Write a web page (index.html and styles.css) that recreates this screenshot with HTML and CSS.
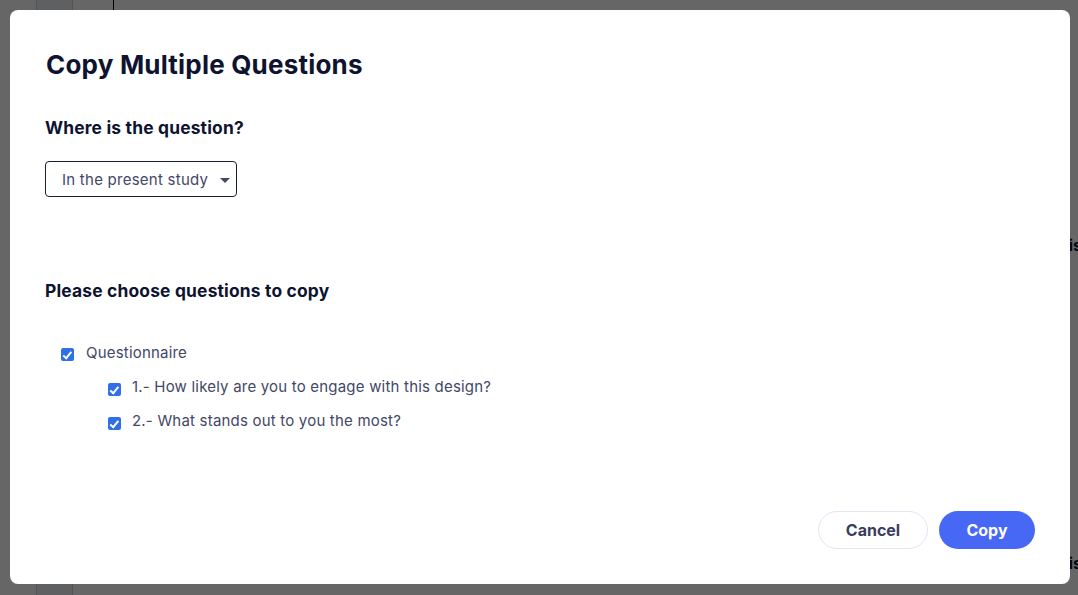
FILE: index.html
```html
<!DOCTYPE html>
<html lang="en">
<head>
<meta charset="utf-8">
<title>Copy Multiple Questions</title>
<link rel="stylesheet" href="styles.css">
</head>
<body>
<div class="page">
  <div class="page-rail"></div>
  <div class="page-divider"></div>
  <div class="page-text t1">This is</div>
  <div class="page-text t2">This is</div>
</div>
<div class="overlay">
  <div class="modal">
    <h1 class="modal-title">Copy Multiple Questions</h1>
    <h2 class="section-title">Where is the question?</h2>
    <div class="select">
      <span class="select-value">In the present study</span>
      <span class="select-caret"></span>
    </div>
    <h2 class="section-title choose">Please choose questions to copy</h2>
    <ul class="tree">
      <li class="row parent"><span class="check"></span><span class="label">Questionnaire</span></li>
      <li class="row child"><span class="check"></span><span class="label">1.- How likely are you to engage with this design?</span></li>
      <li class="row child"><span class="check"></span><span class="label">2.- What stands out to you the most?</span></li>
    </ul>
    <div class="footer">
      <button class="btn btn-cancel">Cancel</button>
      <button class="btn btn-copy">Copy</button>
    </div>
  </div>
</div>
</body>
</html>
```

FILE: styles.css
```css
* { box-sizing: border-box; }
html, body { margin: 0; padding: 0; }
body {
  width: 1078px;
  height: 595px;
  overflow: hidden;
  font-family: Inter, "Noto Sans", sans-serif;
  background: #ffffff;
  position: relative;
}
.page { position: absolute; inset: 0; }
.page-rail {
  position: absolute; left: 36px; top: 0; width: 37px; height: 595px;
  background: #eef0f6;
  border-left: 1px solid #d0d3de;
  border-right: 1px solid #d0d3de;
}
.page-divider {
  position: absolute; left: 113px; top: 0; width: 1px; height: 12px;
  background: #000;
}
.page-text {
  position: absolute; left: 1031px; font-weight: 700; font-size: 16px; color: #0e1330;
  white-space: nowrap;
}
.t1 { top: 235px; }
.t2 { top: 553px; }
.overlay {
  position: absolute; inset: 0;
  background: rgba(0, 0, 0, 0.6);
  display: flex;
  align-items: flex-start;
}
.modal {
  margin: 10px 0 0 10px;
  width: 1060px;
  height: 574px;
  flex: none;
  background: #fff;
  border-radius: 8px;
  padding: 39px 35px 35px 35px;
  display: flex;
  flex-direction: column;
}
.modal-title {
  margin: 0;
  font-size: 26px;
  line-height: 32px;
  font-weight: 700;
  letter-spacing: 0.2px;
  color: #0e1330;
  padding-left: 1px;
}
.section-title {
  margin: 35px 0 0;
  font-size: 17.4px;
  line-height: 24px;
  font-weight: 700;
  letter-spacing: 0.18px;
  color: #0e1330;
}
.section-title.choose { margin-top: 82px; }
.select {
  margin-top: 21px;
  width: 192px;
  height: 36px;
  border: 1px solid #1a1d33;
  border-radius: 4px;
  display: flex;
  align-items: center;
  justify-content: space-between;
  padding-left: 16px;
  padding-right: 6px;
}
.select-value { font-size: 15px; color: #434766; letter-spacing: 0.25px; white-space: nowrap; }
.select-caret {
  flex: none;
  width: 0; height: 0;
  border-left: 5px solid transparent;
  border-right: 5px solid transparent;
  border-top: 5px solid #434766;
  margin-top: 2px;
}
.tree { list-style: none; margin: 33px 0 0; padding: 0; }
.row { height: 34px; display: flex; align-items: center; }
.row.parent { padding-left: 16px; gap: 12px; }
.row.child { padding-left: 63px; gap: 11px; }
.check {
  width: 13px; height: 13px;
  border-radius: 2px;
  background: #2f6fe8;
  position: relative;
  margin-top: 3px;
  flex: none;
}
.row.child .check { margin-top: 5px; }
.check::after {
  content: "";
  position: absolute;
  left: 4px; top: 1.5px;
  width: 3px; height: 6.5px;
  border-right: 2px solid #fff;
  border-bottom: 2px solid #fff;
  transform: rotate(40deg);
}
.label { font-size: 15px; color: #434766; line-height: 20px; letter-spacing: 0.2px; white-space: nowrap; }
.footer {
  margin-top: auto;
  display: flex;
  justify-content: flex-end;
  gap: 11px;
}
.btn {
  height: 38px;
  border-radius: 19px;
  font-family: Inter, "Noto Sans", sans-serif;
  font-size: 16px;
  font-weight: 700;
  cursor: pointer;
}
.btn-cancel {
  width: 110px;
  background: #fff;
  border: 1px solid #e4e5f3;
  color: #3a3d5c;
}
.btn-copy {
  width: 96px;
  background: #4767f5;
  border: none;
  color: #fff;
}
```
